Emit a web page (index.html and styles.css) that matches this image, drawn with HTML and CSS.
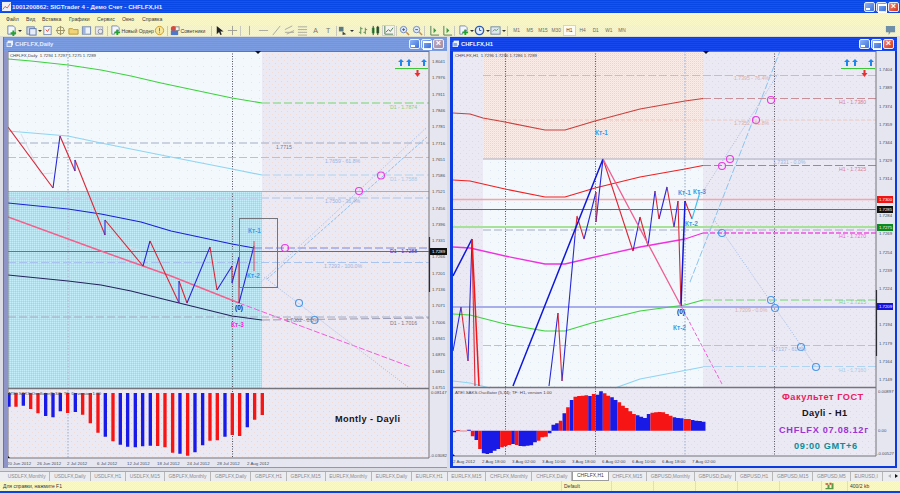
FILE: index.html
```html
<!DOCTYPE html>
<html lang="ru">
<head>
<meta charset="utf-8">
<title>SIGTrader 4</title>
<link rel="stylesheet" href="styles.css">
</head>
<body>
<svg class="defs" aria-hidden="true">
  <defs>
    <pattern id="p-lilac" width="6" height="6" patternUnits="userSpaceOnUse">
      <rect width="6" height="6" fill="#ebe9f4"/>
      <rect x="1" y="1" width="1" height="1" fill="#f2dcd8"/>
      <rect x="4" y="4" width="1" height="1" fill="#d2dbf2"/>
    </pattern>
    <pattern id="p-pale" width="8" height="8" patternUnits="userSpaceOnUse">
      <rect width="8" height="8" fill="#f2f8fc"/>
      <rect x="2" y="3" width="1" height="1" fill="#dfe8f2"/>
    </pattern>
    <pattern id="p-cyan" width="2" height="2" patternUnits="userSpaceOnUse">
      <rect width="2" height="2" fill="#a8e4f6"/>
      <rect width="1" height="1" fill="#92dcf2"/>
      <rect x="1" y="1" width="1" height="1" fill="#c4eefa"/>
    </pattern>
    <pattern id="p-salmon" width="2" height="2" patternUnits="userSpaceOnUse">
      <rect width="2" height="2" fill="#fbece8"/>
      <rect width="1" height="1" fill="#f5d0c8"/>
      <rect x="1" y="1" width="1" height="1" fill="#f9e2dc"/>
    </pattern>
    <symbol id="i-new" viewBox="0 0 12 12"><path d="M2 1h6l2 2v7H2z" fill="#f4f6fb" stroke="#6b7fa8"/><path d="M7 6h2v2h2v2H9v2H7v-2H5V8h2z" fill="#22a52c"/></symbol>
    <symbol id="i-doc" viewBox="0 0 12 12"><rect x="1" y="2" width="8" height="8" fill="#cfd9ef" stroke="#6b7fa8"/><rect x="4" y="4" width="7" height="7" fill="#e6ecf8" stroke="#5874b0"/></symbol>
    <symbol id="i-mkt" viewBox="0 0 12 12"><rect x="2" y="1.500" width="8" height="9" fill="#f4f6fb" stroke="#7a8cae"/><path d="M4 5l2 2 2-3" fill="none" stroke="#d83a2c"/></symbol>
    <symbol id="i-nav" viewBox="0 0 12 12"><circle cx="6" cy="6" r="4" fill="none" stroke="#9a8f60"/><path d="M6 1v10M1 6h10" stroke="#9a8f60"/></symbol>
    <symbol id="i-dir" viewBox="0 0 12 12"><path d="M1 4h4l1 1h5v5H1z" fill="#f2d378" stroke="#b89a3c"/></symbol>
    <symbol id="i-win" viewBox="0 0 12 12"><rect x="1.500" y="2" width="9" height="8" fill="#eef2fa" stroke="#6b7fa8"/><rect x="2" y="2" width="3" height="8" fill="#9fb6e2"/></symbol>
    <symbol id="i-mag" viewBox="0 0 12 12"><rect x="1.500" y="2" width="8" height="8" fill="#e8e8ee" stroke="#a0a4b0"/><circle cx="7" cy="7" r="2.500" fill="none" stroke="#8b90a0"/></symbol>
    <symbol id="i-order" viewBox="0 0 12 12"><path d="M2 1h6l2 2v3H7v2H5v2H2z" fill="#f4f6fb" stroke="#7a8cae"/><path d="M7 5h2v2h2v2H9v2H7V9H5V7h2z" fill="#22a52c"/></symbol>
    <symbol id="i-warn" viewBox="0 0 12 12"><circle cx="6" cy="6" r="4.500" fill="#f7e8a0" stroke="#c89a2a"/><path d="M6 3v4M6 8v1" stroke="#c0641a"/></symbol>
    <symbol id="i-ea" viewBox="0 0 12 12"><circle cx="5" cy="4" r="3" fill="#d84a3c"/><rect x="2" y="6" width="8" height="5" fill="#4f78c8"/><rect x="7" y="2" width="4" height="4" fill="#f2f2f2" stroke="#888"/></symbol>
    <symbol id="i-cur" viewBox="0 0 12 12"><path d="M3 1v9l2.500-2.500L7 11l1.500-.7L7 7h3.500z" fill="#222"/></symbol>
    <symbol id="i-cross" viewBox="0 0 12 12"><path d="M6 1v10M1 6h10" stroke="#9a9a90"/></symbol>
    <symbol id="i-vl" viewBox="0 0 12 12"><path d="M6 1v10" stroke="#a6a69a"/></symbol>
    <symbol id="i-hl" viewBox="0 0 12 12"><path d="M1 6h10" stroke="#a6a69a"/></symbol>
    <symbol id="i-sl" viewBox="0 0 12 12"><path d="M2 11L10 1" stroke="#a6a69a"/></symbol>
    <symbol id="i-ch" viewBox="0 0 12 12"><path d="M1 5L9 1M3 10l8-4M1 8h10" stroke="#a6a69a" fill="none"/></symbol>
    <symbol id="i-fib" viewBox="0 0 12 12"><path d="M1 2h10M1 5h10M1 8h10M1 11h10" stroke="#a6a69a"/></symbol>
    <symbol id="i-shp" viewBox="0 0 12 12"><rect x="1" y="2" width="5" height="5" fill="#5a7a80"/><path d="M5 7l4 3-4 1z" fill="#444"/></symbol>
    <symbol id="i-bar" viewBox="0 0 12 12"><path d="M3 2v8M3 4h2M3 8H1M8 3v7M8 5h2M8 8H6" stroke="#5a8a50" fill="none"/></symbol>
    <symbol id="i-cnd" viewBox="0 0 12 12"><rect x="2" y="3" width="3" height="6" fill="#4a9a48"/><rect x="7" y="2" width="3" height="7" fill="#3a6a3a"/><path d="M3.500 1v10M8.500 1v10" stroke="#333"/></symbol>
    <symbol id="i-lin" viewBox="0 0 12 12"><path d="M2 1v9h9M3 8l3-3 2 2 3-4" stroke="#4a7a50" fill="none"/></symbol>
    <symbol id="i-zin" viewBox="0 0 12 12"><circle cx="5" cy="5" r="3.500" fill="#dfe9f8" stroke="#6e86b4"/><path d="M3.500 5h3M5 3.500v3" stroke="#3a5a98"/><path d="M8 8l3 3" stroke="#c08a4a" stroke-width="1.500"/></symbol>
    <symbol id="i-zou" viewBox="0 0 12 12"><circle cx="5" cy="5" r="3.500" fill="#dfe9f8" stroke="#6e86b4"/><path d="M3.500 5h3" stroke="#3a5a98"/><path d="M8 8l3 3" stroke="#c08a4a" stroke-width="1.500"/></symbol>
    <symbol id="i-auto" viewBox="0 0 12 12"><path d="M2 1v10h9" stroke="#4a7a50" fill="none"/><path d="M5 3v6l3-3z" fill="#3a9a40"/></symbol>
    <symbol id="i-clock" viewBox="0 0 12 12"><circle cx="6" cy="6" r="4.500" fill="#e8effa" stroke="#2a5ab8" stroke-width="1.500"/><path d="M6 3v3h2" stroke="#2a5ab8" fill="none"/></symbol>
    <symbol id="i-tpl" viewBox="0 0 12 12"><rect x="1" y="2" width="10" height="8" fill="#dfe7f0" stroke="#6e86a0"/><path d="M3 7l2-2 2 1 2-2" stroke="#4a9a58" fill="none"/></symbol>
    <symbol id="i-msg" viewBox="0 0 12 12"><path d="M1 1h10v7H6l-2 3V8H1z" fill="#6f8fa8"/></symbol>
    <symbol id="i-app" viewBox="0 0 12 12"><rect width="12" height="12" fill="#eef2f8"/><path d="M1 10l3-4 3 2 4-6" stroke="#d83a2c" fill="none"/></symbol>
    <symbol id="i-mdi" viewBox="0 0 12 12"><rect x="3" y="1.500" width="7" height="6" fill="#dfe9f8" stroke="#fff"/><rect x="1.500" y="4" width="7" height="6" fill="#8aa8e4" stroke="#fff"/></symbol>
    <symbol id="i-stat" viewBox="0 0 12 12"><path d="M0 9h3V4h3v5h3V2h3v9H0z" fill="#5a9a48"/><path d="M0 2h4v2H0zM6 1h3v3H6z" fill="#c84a3a"/></symbol>
  </defs>
</svg>

<div class="app">
  <header class="titlebar">
    <svg class="ico ico-app"><use href="#i-app"/></svg>
    <span class="titlebar-text">1001200862: SIGTrader 4 - Демо Счет - CHFLFX,H1</span>
    <span class="winbtns">
      <span class="wb wb-min"></span><span class="wb wb-max"></span><span class="wb wb-close">×</span>
    </span>
  </header>

  <nav class="menubar">
    <span class="m m1">Файл</span><span class="m m2">Вид</span><span class="m m3">Вставка</span><span class="m m4">Графики</span><span class="m m5">Сервис</span><span class="m m6">Окно</span><span class="m m7">Справка</span>
  </nav>

  <div class="toolbar">
    <span class="tb tb-c c20"><svg class="ico"><use href="#i-new"/></svg><i class="caret"></i></span>
    <span class="tb tb-c c15"><svg class="ico"><use href="#i-doc"/></svg><i class="caret"></i></span>
    <span class="tb"><svg class="ico"><use href="#i-mkt"/></svg></span>
    <span class="tb"><svg class="ico"><use href="#i-nav"/></svg></span>
    <span class="tb"><svg class="ico"><use href="#i-dir"/></svg></span>
    <span class="tb"><svg class="ico"><use href="#i-win"/></svg></span>
    <span class="tb"><svg class="ico"><use href="#i-mag"/></svg></span>
    <span class="tsep s35"></span>
    <span class="tb tb-t tb-order"><svg class="ico"><use href="#i-order"/></svg>Новый Ордер</span>
    <span class="tb"><svg class="ico"><use href="#i-warn"/></svg></span>
    <span class="tsep s3"></span>
    <span class="tb tb-t tb-ea"><svg class="ico"><use href="#i-ea"/></svg>Советники</span>
    <span class="tsep s3"></span>
    <span class="tb"><svg class="ico"><use href="#i-cur"/></svg></span>
    <span class="tb"><svg class="ico"><use href="#i-cross"/></svg></span>
    <span class="tsep s4"></span>
    <span class="tb"><svg class="ico"><use href="#i-vl"/></svg></span>
    <span class="gap1"></span>
    <span class="tb"><svg class="ico"><use href="#i-hl"/></svg></span>
    <span class="tb"><svg class="ico"><use href="#i-sl"/></svg></span>
    <span class="tb"><svg class="ico"><use href="#i-ch"/></svg></span>
    <span class="tb"><svg class="ico"><use href="#i-fib"/></svg></span>
    <span class="tb tb-a">A</span>
    <span class="tb tb-a tb-n">T</span>
    <span class="tsep s3"></span>
    <span class="tb tb-c c18"><svg class="ico"><use href="#i-shp"/></svg><i class="caret"></i></span>
    <span class="gap1"></span>
    <span class="tb tb-n"><svg class="ico"><use href="#i-bar"/></svg></span>
    <span class="tb tb-n"><svg class="ico"><use href="#i-cnd"/></svg></span>
    <span class="tb tb-on"><svg class="ico"><use href="#i-lin"/></svg></span>
    <span class="tsep s3"></span>
    <span class="tb"><svg class="ico"><use href="#i-zin"/></svg></span>
    <span class="tb tb-n12"><svg class="ico"><use href="#i-zou"/></svg></span>
    <span class="tsep s5"></span>
    <span class="tb"><svg class="ico"><use href="#i-auto"/></svg></span>
    <span class="tb tb-n12"><svg class="ico"><use href="#i-auto"/></svg></span>
    <span class="tsep s5"></span>
    <span class="tb tb-c c16"><svg class="ico"><use href="#i-order"/></svg><i class="caret"></i></span>
    <span class="tb tb-c c16"><svg class="ico"><use href="#i-clock"/></svg><i class="caret"></i></span>
    <span class="tb tb-c c16"><svg class="ico"><use href="#i-tpl"/></svg><i class="caret"></i></span>
    <span class="tsep s4"></span>
    <span class="per">M1</span><span class="per">M5</span><span class="per">M15</span><span class="per">M30</span><span class="per per-on">H1</span><span class="per">H4</span><span class="per">D1</span><span class="per">W1</span><span class="per">MN</span>
    <span class="tb tb-end"><svg class="ico"><use href="#i-msg"/></svg></span>
  </div>

  <main class="mdi">
    <section class="win win-left">
      <div class="wtitle">
        <svg class="ico ico-mdi"><use href="#i-mdi"/></svg>
        <span class="wtitle-text">CHFLFX,Daily</span>
        <span class="winbtns winbtns-in">
          <span class="wb wb-min"></span><span class="wb wb-max"></span><span class="wb wb-close wb-dim">×</span>
        </span>
      </div>
      <svg class="chart chart-left" viewBox="7 52 439 416" role="img" aria-label="CHFLFX Daily">
        <rect x="7" y="52" width="254" height="337" fill="url(#p-pale)"/>
        <rect x="261" y="52" width="167" height="337" fill="url(#p-lilac)"/>
        <rect x="7" y="193" width="254" height="196" fill="url(#p-cyan)"/>
        <rect x="7" y="390" width="421" height="69" fill="url(#p-lilac)"/>
        <rect x="428" y="52" width="18" height="416" class="axisbg"/>
        <rect x="7" y="459" width="439" height="9" class="axisbg"/>

        <path class="vdot vdot-l" d="M67 52V459"/>
        <path class="vdot" d="M231.500 52V459"/>

        <path class="dash d-gray" d="M7 144H428"/>
        <path class="dash d-ltb" d="M7 158.500H428"/>
        <path class="solid s-gray" d="M7 192.500H428"/>
        <path class="dash d-ltb d-pale" d="M7 199H428"/>
        <path class="solid s-olive" d="M7 252.500H261"/>
        <path class="solid s-dk" d="M261 252.500H428"/>
        <path class="dash d-ltb" d="M7 263.500H428"/>
        <path class="dash d-gray" d="M7 318H428"/>

        <path class="cv c-green" d="M7 60L30 62 67 66 100 71 130 77 160 84 231 99 261 104"/>
        <path class="dash c-green-d" d="M261 104H428"/>
        <path class="cv c-sky" d="M7 132L67 137 100 144 170 158 231 170 261 176"/>
        <path class="dash c-sky-d" d="M261 176H428"/>
        <path class="cv c-blue" d="M7 204L67 210 100 215 140 223 170 232 231 245 253 249"/>
        <path class="dash c-blue-d" d="M253 249H428"/>
        <path class="cv c-navy" d="M7 276L67 282 100 286 130 292 170 302 231 317 261 321"/>
        <path class="dash c-navy-d" d="M261 321L428 319"/>
        <path class="cv c-pink" d="M7 218L100 252 170 277 238 304"/>
        <path class="dash c-mag-d" d="M238 304L410 368"/>

        <path class="zz z-ghost" d="M20 135L40 175 52 174M60 140L74 172M86 190L100 225 120 245 140 252"/>
        <path class="zz z-red" d="M7 128L52 189M59 137L74 172M74 161L104 236M104 221L142 267M149 242L178 304M178 282L186 304M209 248L216 291M231 267V284M238 258V304"/>
        <path class="zz z-blue" d="M52 189L59 137M74 172V161M104 236V221M142 267L149 242M178 304V282M186 304L209 248M216 291L231 267M231 284L238 258M238 304L253 247"/>
        <path class="zz z-pinkred" d="M253 242V272"/>

        <path class="dot dot-b" d="M258 285L426 128"/>
        <path class="dot dot-b dot-s" d="M266 280L426 138"/>
        <path class="dot dot-b" d="M263 278L407 388"/>

        <rect x="238.500" y="219.500" width="38" height="69" class="box"/>
        <circle cx="284" cy="249" r="3.500" class="ring r-m"/>
        <circle cx="358" cy="192" r="3.500" class="ring r-m"/>
        <circle cx="380" cy="176.500" r="3.500" class="ring r-m"/>
        <circle cx="298" cy="304" r="3.500" class="ring r-b"/>
        <circle cx="313.500" cy="321" r="3.500" class="ring r-b"/>

        <text class="lab lab-g" x="389" y="110">D1 - 1.7874</text>
        <text class="lab lab-s" x="389" y="182">D1 - 1.7588</text>
        <text class="lab lab-n" x="275" y="150">1.7715</text>
        <text class="lab lab-f" x="324" y="164">1.7659 - 61.8%</text>
        <text class="lab lab-f" x="324" y="204">1.7500 - 36.4%</text>
        <text class="lab lab-bb" x="389" y="254">D1 - 1.7288</text>
        <text class="lab lab-f" x="323" y="269">1.7293 - 100.0%</text>
        <text class="lab lab-n" x="389" y="326">D1 - 1.7016</text>
        <text class="lab lab-n" x="285" y="323">1.7002 - 0.0%</text>

        <text class="kt kt-b" x="247" y="234">Кт-1</text>
        <text class="kt kt-b" x="246" y="279">Кт-2</text>
        <text class="kt kt-m" x="230" y="328">Кт-3</text>
        <text class="kt kt-n" x="234" y="311">(0)</text>

        <path class="arr-u" d="M400 60l3 3h-2v4h-2v-4h-2zM408 60l3 3h-2v4h-2v-4h-2zM423 60l3 3h-2v4h-2v-4h-2z"/>
        <path class="arr-g" d="M394 69.500H427"/>
        <path class="arr-d" d="M415.500 71h2v3h2l-3 4-3-4h2z"/>

        <text class="hdr" x="9" y="58">CHFLFX,Daily  1.7294 1.7297 1.7275 1.7289</text>

        <path class="paneline" d="M7 52.500H428M428 52V459M7 459H428M7 52V459"/>
        <path class="paneline-b" d="M7 389.500H428"/>
        <path class="axisbar" d="M428.500 238V293"/>
        <path class="tri" d="M254 52h6l-3 3z"/>

        <g class="ax">
          <text x="431" y="64">1.8041</text><text x="431" y="80">1.7976</text><text x="431" y="97">1.7911</text><text x="431" y="113">1.7846</text><text x="431" y="129">1.7781</text><text x="431" y="146">1.7716</text><text x="431" y="162">1.7651</text><text x="431" y="178">1.7586</text><text x="431" y="194">1.7521</text><text x="431" y="211">1.7456</text><text x="431" y="227">1.7396</text><text x="431" y="243">1.7331</text><text x="431" y="259">1.7266</text><text x="431" y="276">1.7201</text><text x="431" y="292">1.7136</text><text x="431" y="308">1.7071</text><text x="431" y="325">1.7006</text><text x="431" y="341">1.6941</text><text x="431" y="357">1.6876</text><text x="431" y="374">1.6811</text><text x="431" y="390">1.6751</text><text x="430" y="395">0.08147</text><text x="429" y="458">-0.03082</text>
        </g>
        <rect x="429" y="249" width="17" height="7" class="pb pb-k"/>
        <text class="pbt" x="431" y="254">1.7289</text>

        <g transform="translate(0 385) scale(.3333)">
          <path class="hist h-b" d="M24 27V68M67 27V65M134 27V96M156 27V100M178 27V82M223 27V84M313 27V158M358 27V182M380 27V188M403 27V190M425 27V187M448 27V185M537 27V209M582 27V205M605 27V184M672 27V158M739 27V130"/>
          <path class="hist h-r" d="M45 27V68M89 27V75M111 27V88M200 27V87M245 27V92M268 27V118M291 27V146M336 27V172M470 27V186M492 27V190M515 27V206M560 27V215M627 27V170M649 27V169M694 27V153M716 27V156M761 27V107M784 27V93"/>
        </g>
        <text class="osc" x="7" y="396">ATEI.SAKS.Oscillator(5,34); TF: D, version 1.00</text>
        <text class="big" x="334" y="423" textLength="65">Montly - Dayli</text>
        <path class="tri" d="M7 457l2 2H7z"/>

        <g class="tm">
          <text x="6" y="466">20 Jun 2012</text><text x="36" y="466">26 Jun 2012</text><text x="66" y="466">2 Jul 2012</text><text x="96" y="466">6 Jul 2012</text><text x="126" y="466">12 Jul 2012</text><text x="156" y="466">18 Jul 2012</text><text x="186" y="466">24 Jul 2012</text><text x="216" y="466">28 Jul 2012</text><text x="246" y="466">2 Aug 2012</text>
        </g>
      </svg>
    </section>

    <section class="win win-right">
      <div class="wtitle wtitle-on">
        <svg class="ico ico-mdi"><use href="#i-mdi"/></svg>
        <span class="wtitle-text">CHFLFX,H1</span>
        <span class="winbtns winbtns-in">
          <span class="wb wb-min"></span><span class="wb wb-max"></span><span class="wb wb-close">×</span>
        </span>
      </div>
      <svg class="chart chart-right" viewBox="453 52 442 415" role="img" aria-label="CHFLFX H1">
        <rect x="453" y="52" width="30" height="337" fill="url(#p-lilac)"/>
        <rect x="483" y="52" width="220" height="108" fill="url(#p-salmon)"/>
        <rect x="483" y="160" width="220" height="229" fill="url(#p-pale)"/>
        <rect x="703" y="52" width="173" height="337" fill="url(#p-lilac)"/>
        <rect x="453" y="389" width="423" height="68" fill="url(#p-lilac)"/>
        <rect x="876" y="52" width="19" height="415" class="axisbg"/>
        <rect x="453" y="457" width="442" height="10" class="axisbg"/>

        <path class="vdot vdot-d" d="M505.500 52V457M595.500 52V457M774.500 52V457"/>
        <path class="vdot vdot-l" d="M685 52V457"/>

        <path class="dash d-mauve" d="M483 76.500H876"/>
        <path class="dash d-peach" d="M483 121H876"/>
        <path class="solid s-gray" d="M483 160H876"/>
        <path class="solid s-pink" d="M453 200.500H876"/>
        <path class="solid s-dk" d="M453 210.500H876"/>
        <path class="solid s-lgreen" d="M453 228H876"/>
        <path class="dash d-gray" d="M483 231H876"/>
        <path class="solid s-lilac" d="M453 308H876"/>
        <path class="dash d-ltb" d="M483 346.500H876"/>

        <path class="cv c-brick" d="M453 114L470 115 483 119 505 123 545 131 565 131 595 122 640 110 685 102 703 99.500"/>
        <path class="dash c-brick-d" d="M703 99.500H876"/>
        <path class="cv c-red" d="M453 181L470 182 505 190 545 198 565 198 595 189 640 178 685 170 703 166.500"/>
        <path class="dash c-red-d" d="M703 166.500H876"/>
        <path class="cv c-mag" d="M453 248L470 249 505 257 545 265 565 265 595 258 640 248 685 240 703 234"/>
        <path class="dash c-mag-d2" d="M703 234H876"/>
        <path class="cv c-green" d="M453 315L470 316 505 325 545 332 565 332 595 323 640 312 685 306 703 301"/>
        <path class="dash c-green-d" d="M703 301H876"/>
        <path class="cv c-sky" d="M453 382L470 384 490 389M615 389L640 380 703 368"/>
        <path class="dash c-sky-d" d="M703 367.500H876"/>

        <path class="dot dot-b" d="M697 202L778 75"/>
        <path class="dash c-ltline" d="M690 283L780 52"/>
        <path class="dot dot-b" d="M715 222L816 368"/>
        <path class="dash c-mag-d3" d="M681 307L722 385"/>

        <path class="zz z-blue" d="M549 387L558 314M562 382L575 237M584 240L596 193M596 223L603 160M633 252L640 218M648 247L655 192M659 220L667 188M674 228L678 202M453 352L461 308M468 362L472 240"/>
        <path class="zz z-red" d="M558 314L562 382M575 237L577 217 584 240M603 160L633 252M640 218L648 247M655 192L659 220M667 188L674 228M678 202L681 307M596 193V223M461 308L468 362M472 240L475 387M685 202L692 220"/>
        <path class="zz z-thick-b" d="M513 387L603 160M453 277L472 240M681 307L685 202"/>
        <path class="zz z-thick-p" d="M603 160L681 307"/>
        <path class="zz z-thick-r" d="M472 240L479 387"/>
        <path class="zz z-sky" d="M692 220L700 193"/>

        <circle cx="771" cy="101" r="3.500" class="ring r-m"/>
        <circle cx="756" cy="121" r="3.500" class="ring r-m"/>
        <circle cx="730" cy="160" r="3.500" class="ring r-m"/>
        <circle cx="722" cy="167" r="3.500" class="ring r-m"/>
        <circle cx="722" cy="234" r="3.500" class="ring r-b"/>
        <circle cx="771" cy="301" r="3.500" class="ring r-b"/>
        <circle cx="775" cy="309" r="3.500" class="ring r-b"/>
        <circle cx="801" cy="348" r="3.500" class="ring r-b"/>
        <circle cx="816" cy="368" r="3.500" class="ring r-b"/>

        <text class="lab lab-p" x="734" y="81">1.7395 - 76.4%</text>
        <text class="lab lab-p" x="734" y="126">1.7352 - 61.8%</text>
        <text class="lab lab-r" x="839" y="105">H1 - 1.7380</text>
        <text class="lab lab-r" x="839" y="172">H1 - 1.7325</text>
        <text class="lab lab-f" x="773" y="165">1.7331 - 0.0%</text>
        <text class="lab lab-m" x="839" y="239">H1 - 1.7270</text>
        <text class="lab lab-g" x="839" y="305">H1 - 1.7215</text>
        <text class="lab lab-p" x="735" y="313">1.7209 - 0.0%</text>
        <text class="lab lab-f" x="771" y="352">1.7137 - 61.8%</text>
        <text class="lab lab-s" x="839" y="373">H1 - 1.7160</text>

        <text class="kt kt-b" x="595" y="136">Кт-1</text>
        <text class="kt kt-b" x="678" y="196">Кт-1</text>
        <text class="kt kt-b" x="693" y="195">Кт-3</text>
        <text class="kt kt-b" x="685" y="227">Кт-2</text>
        <text class="kt kt-b" x="673" y="331">Кт-2</text>
        <text class="kt kt-n" x="677" y="315">(0)</text>

        <path class="arr-u" d="M847 60l3 3h-2v4h-2v-4h-2zM855 60l3 3h-2v4h-2v-4h-2zM871 60l3 3h-2v4h-2v-4h-2z"/>
        <path class="arr-g" d="M841 69.500H875"/>
        <path class="arr-d" d="M863.500 71h2v3h2l-3 4-3-4h2z"/>

        <text class="hdr" x="455" y="58">CHFLFX,H1  1.7296 1.7296 1.7286 1.7289</text>

        <path class="paneline" d="M453 52.500H876M876 52V457M453 457H876"/>
        <path class="paneline-b" d="M453 388.500H876"/>
        <path class="axisbar" d="M876.500 291V357"/>
        <path class="tri" d="M703 52h6l-3 3z"/>

        <g class="ax">
          <text x="879" y="72">1.7404</text><text x="879" y="90">1.7389</text><text x="879" y="109">1.7374</text><text x="879" y="127">1.7359</text><text x="879" y="145">1.7344</text><text x="879" y="163">1.7329</text><text x="879" y="181">1.7314</text><text x="879" y="218">1.7284</text><text x="879" y="236">1.7269</text><text x="879" y="255">1.7254</text><text x="879" y="273">1.7239</text><text x="879" y="291">1.7224</text><text x="879" y="327">1.7194</text><text x="879" y="346">1.7179</text><text x="879" y="364">1.7164</text><text x="879" y="382">1.7149</text><text x="878" y="394">0.00897</text><text x="878" y="433">0.00</text><text x="877" y="456">-0.00527</text>
        </g>
        <rect x="877" y="197" width="16" height="7" class="pb pb-r"/><text class="pbt" x="879" y="202">1.7300</text>
        <rect x="877" y="207" width="16" height="7" class="pb pb-k"/><text class="pbt" x="879" y="212">1.7285</text>
        <rect x="877" y="225" width="16" height="7" class="pb pb-g"/><text class="pbt" x="879" y="230">1.7275</text>
        <rect x="877" y="304" width="16" height="7" class="pb pb-b"/><text class="pbt" x="879" y="309">1.7209</text>

        <g transform="translate(450 385) scale(.3333)">
          <path class="hist2 h-b" d="M13 140V145M57 140V137M79 140V168M101 140V208M112 140V210M123 140V207M134 140V200M145 140V195M189 140V180M211 140V186M222 140V187M233 140V185M244 140V184M255 140V175M299 140V148M310 140V122M321 140V118M343 140V88M365 140V48M420 140V36M442 140V32M453 140V22M486 140V40M497 140V48M563 140V94M574 140V98M585 140V102M596 140V90M673 140V100M684 140V102M695 140V103M728 140V108M739 140V110M750 140V111M761 140V113"/>
          <path class="hist2 h-r" d="M24 140V138M35 140V142M46 140V142M68 140V157M90 140V195M156 140V190M167 140V187M178 140V183M200 140V183M266 140V170M277 140V160M288 140V158M332 140V110M354 140V70M376 140V38M387 140V36M398 140V35M409 140V34M431 140V30M464 140V28M475 140V35M508 140V55M519 140V65M530 140V72M541 140V82M552 140V90M607 140V86M618 140V85M629 140V84M640 140V85M651 140V90M662 140V95M706 140V105M717 140V105"/>
        </g>
        <text class="osc" x="455" y="395">ATEI.SAKS.Oscillator (5,34); TF: H1, version 1.00</text>
        <text class="big b-c" x="782" y="401" textLength="81">Факультет ГОСТ</text>
        <text class="big" x="802" y="417" textLength="45">Dayli - H1</text>
        <text class="big b-p" x="779" y="434" textLength="89">CHFLFX 07.08.12г</text>
        <text class="big b-t" x="794" y="450" textLength="63">09:00 GMT+6</text>
        <path class="tri" d="M453 455l2 2h-2z"/>

        <g class="tm">
          <text x="453" y="464">2 Aug 2012</text><text x="482" y="464">2 Aug 18:00</text><text x="512" y="464">3 Aug 02:00</text><text x="542" y="464">3 Aug 10:00</text><text x="572" y="464">3 Aug 18:00</text><text x="602" y="464">6 Aug 02:00</text><text x="632" y="464">6 Aug 10:00</text><text x="662" y="464">6 Aug 18:00</text><text x="692" y="464">7 Aug 02:00</text>
        </g>
      </svg>
    </section>
  </main>

  <div class="tabs">
    <span class="tab">USDLFX,Monthly</span><span class="tab">USDLFX,Daily</span><span class="tab">USDLFX,H1</span><span class="tab">USDLFX,M15</span><span class="tab">GBPLFX,Monthly</span><span class="tab">GBPLFX,Daily</span><span class="tab">GBPLFX,H1</span><span class="tab">GBPLFX,M15</span><span class="tab">EURLFX,Monthly</span><span class="tab">EURLFX,Daily</span><span class="tab">EURLFX,H1</span><span class="tab">EURLFX,M15</span><span class="tab">CHFLFX,Monthly</span><span class="tab">CHFLFX,Daily</span><span class="tab tab-on">CHFLFX,H1</span><span class="tab">CHFLFX,M15</span><span class="tab">GBPUSD,Monthly</span><span class="tab">GBPUSD,Daily</span><span class="tab">GBPUSD,H1</span><span class="tab">GBPUSD,M15</span><span class="tab">GBPUSD,M5</span><span class="tab">EURUSD,I</span>
    <span class="tabarrows"><i class="ta ta-l"></i><i class="ta ta-r"></i></span>
  </div>

  <footer class="status">
    <span class="st st-help">Для справки, нажмите F1</span>
    <span class="st st-prof">Default</span>
    <span class="st st-a"></span><span class="st st-a"></span><span class="st st-a"></span><span class="st st-a"></span><span class="st st-a"></span>
    <span class="st st-conn"><svg class="ico"><use href="#i-stat"/></svg></span>
    <span class="st st-kb">400/2 kb</span>
  </footer>
  <div class="bottomstripe"></div>
</div>
</body>
</html>
```
FILE: styles.css
```css
* { box-sizing: border-box; }
html, body { margin: 0; padding: 0; }
body {
  width: 900px;
  height: 493px;
  overflow: hidden;
  font-family: "Liberation Sans", Arial, sans-serif;
  background: #dcdce4;
}
.defs { position: absolute; width: 0; height: 0; }
.app { width: 900px; height: 493px; display: flex; flex-direction: column; }
.ico { width: 11px; height: 11px; display: block; flex: none; }

/* main title bar */
.titlebar {
  height: 13px;
  display: flex;
  align-items: center;
  padding: 0 1px 0 2px;
  gap: 1px;
  color: #e6ecff;
  font-size: 6.2px;
  font-weight: bold;
  background: repeating-linear-gradient(180deg, #0a48e6 0 1px, #1254ee 1px 2px);
}
.ico-app { width: 9px; height: 9px; }
.winbtns { margin-left: auto; display: flex; gap: 1px; }
.wb {
  width: 11px;
  height: 10px;
  border: 1px solid #e8eefc;
  border-radius: 2px;
  background: linear-gradient(135deg, #8fb4f4, #3a70dc);
  position: relative;
  display: block;
  font-size: 9px;
  line-height: 7px;
  text-align: center;
  color: #fff;
  font-weight: bold;
}
.wb-close { background: linear-gradient(135deg, #f08a78, #d83418); }
.wb-dim { background: linear-gradient(135deg, #c0a8b8, #a08ca8); }
.wb-min::after { content: ""; position: absolute; left: 1px; bottom: 1px; width: 4px; height: 2px; background: #fff; }
.wb-max::after { content: ""; position: absolute; left: 1px; top: 1px; width: 7px; height: 6px; border: 1px solid #fff; border-top-width: 2px; }

/* menu */
.menubar {
  height: 12px;
  display: flex;
  align-items: center;
  font-size: 5.2px;
  color: #3a3a34;
  background: repeating-conic-gradient(#fbf8c8 0 25%, #f0eedc 0 50%) 0 0 / 2px 2px;
}
.m { display: block; }
.m1 { margin-left: 6px; width: 20px; }
.m2 { width: 16px; }
.m3 { width: 27px; }
.m4 { width: 28px; }
.m5 { width: 25px; }
.m6 { width: 20px; }

/* toolbar */
.toolbar {
  height: 12px;
  display: flex;
  align-items: center;
  padding-left: 6px;
  font-size: 5.1px;
  color: #3c3c3c;
  background: repeating-conic-gradient(#f8f6cc 0 25%, #eeecdc 0 50%) 0 0 / 2px 2px;
  border-bottom: 1px solid #dcdcd0;
}
.tb { width: 13px; flex: none; display: flex; align-items: center; justify-content: center; white-space: nowrap; }
.tb-n { width: 12.5px; }
.tb-n12 { width: 12px; }
.tb-c { justify-content: flex-start; }
.tb-c .ico { margin-right: 1px; }
.c20 { width: 20px; }
.c15 { width: 15px; }
.c18 { width: 18px; }
.c16 { width: 16px; }
.caret { width: 0; height: 0; border: 2px solid transparent; border-top: 2px solid #333; border-bottom: 0; display: block; }
.tb-t { justify-content: flex-start; gap: 1px; }
.tb-order { width: 43px; }
.tb-ea { width: 41px; }
.tb-a { font-size: 7px; color: #77776c; }
.tb-on { background: #f4f4ee; outline: 1px solid #d0d0c8; outline-offset: -1px; }
.tsep { height: 10px; flex: none; position: relative; }
.tsep::after { content: ""; position: absolute; left: 1px; top: 0; height: 10px; width: 1px; background: #c8c8bc; }
.s3 { width: 3px; }
.s35 { width: 3.5px; }
.s4 { width: 4px; }
.s5 { width: 5px; }
.gap1 { width: 1.5px; flex: none; }
.per { width: 13.2px; flex: none; text-align: center; color: #6a6a60; font-size: 4.8px; line-height: 11px; }
.per-on { background: #fcfcf4; outline: 1px solid #d4d4cc; outline-offset: -1px; color: #333; }
.tb-end { margin-left: auto; margin-right: 3px; }

/* windows */
.mdi { height: 434px; display: flex; gap: 3px; padding-left: 3px; }
.win { height: 431px; display: flex; flex-direction: column; }
.win-left { width: 444px; background: #8f94c8; padding: 0 1px 2px 4px; border-left: 1px solid #6a70b0; }
.win-right { width: 447px; background: #0a3ae0; padding: 0 2px 2px 3px; }
.wtitle {
  height: 14px;
  margin: 0 -1px 0 -4px;
  display: flex;
  align-items: center;
  gap: 1px;
  padding: 0 2px 0 2px;
  background: repeating-linear-gradient(180deg, #7494dc 0 1px, #7c9ce2 1px 2px);
  color: #e4ecfc;
  font-size: 5.8px;
  font-weight: bold;
  flex: none;
}
.wtitle-on {
  margin: 0 -2px 0 -3px;
  background: repeating-linear-gradient(180deg, #0e3ee4 0 1px, #1648ee 1px 2px);
  color: #f2f6ff;
}
.ico-mdi { width: 8px; height: 8px; }
.winbtns-in { gap: 1px; margin-right: 1px; }
.chart { display: block; flex: none; }
.chart-left { width: 439px; height: 416px; }
.chart-right { width: 442px; height: 415px; }

/* chart pieces */
.axisbg { fill: #e6e6f0; }
.vdot { fill: none; stroke: #50505c; stroke-width: 1; stroke-dasharray: 1 1.500; }
.vdot-l { stroke: #b4c0d8; stroke-width: 1.500; stroke-dasharray: 1.500 1.500; }
.vdot-d { stroke: #55505c; }
.dash { fill: none; stroke-dasharray: 8 3; stroke-width: 1; }
.d-gray { stroke: #a4acc4; }
.d-ltb { stroke: #a9c4ee; }
.d-pale { stroke: #c2d0ea; stroke-width: 1.500; }
.d-mauve { stroke: #d4b4d4; }
.d-peach { stroke: #eec8bc; stroke-dasharray: 4 2; }
.solid { fill: none; stroke-width: 1; }
.s-gray { stroke: #a8acbc; }
.s-olive { stroke: #7c7a38; }
.s-dk { stroke: #6c6c6c; }
.s-pink { stroke: #f6a4a4; stroke-width: 1.500; }
.s-lgreen { stroke: #a8e29a; stroke-width: 2; }
.s-lilac { stroke: #a8aeea; stroke-width: 2; }
.cv { fill: none; stroke-width: 1; stroke-linejoin: round; }
.c-green { stroke: #3ed23e; stroke-width: 1.200; }
.c-green-d { stroke: #72d672; }
.c-sky { stroke: #8fd4f2; stroke-width: 1.200; }
.c-sky-d { stroke: #aed4f2; }
.c-blue { stroke: #1820d8; stroke-width: 1.100; }
.c-blue-d { stroke: #7c84dc; }
.c-navy { stroke: #24245c; stroke-width: 1.100; }
.c-navy-d { stroke: #9c9cb4; }
.c-pink { stroke: #f4608c; stroke-width: 1.500; }
.c-mag-d { stroke: #f060d8; stroke-dasharray: 6 2; }
.c-brick { stroke: #c8403c; stroke-width: 1.200; }
.c-brick-d { stroke: #c89098; }
.c-red { stroke: #f02020; stroke-width: 1.200; }
.c-red-d { stroke: #f06868; }
.c-mag { stroke: #f030e0; stroke-width: 1.300; }
.c-mag-d2 { stroke: #f050e0; stroke-width: 1.300; stroke-dasharray: 5 2; }
.c-mag-d3 { stroke: #f060d8; stroke-dasharray: 4 2; }
.c-ltline { stroke: #8cc4f0; stroke-dasharray: 7 2; }
.zz { fill: none; stroke-width: 1; stroke-linejoin: miter; }
.z-red { stroke: #d82838; stroke-width: 1.100; }
.z-blue { stroke: #2828d8; stroke-width: 1.100; }
.z-ghost { stroke: #dcdce8; }
.z-pinkred { stroke: #e84858; }
.z-thick-b { stroke: #1018d8; stroke-width: 1.500; }
.z-thick-p { stroke: #f05c90; stroke-width: 1.300; }
.z-thick-r { stroke: #f01818; stroke-width: 1.500; }
.z-sky { stroke: #40c0f0; stroke-width: 1.100; }
.dot { fill: none; stroke: #a4bce6; stroke-dasharray: 1 1.500; }
.dot-s { stroke: #8cc0ec; stroke-dasharray: 3 1.500; }
.box { fill: none; stroke: #74747c; stroke-width: 1; }
.ring { fill: none; stroke-width: 1.100; }
.r-m { stroke: #e83ae0; }
.r-b { stroke: #4898e8; }

.lab { font-size: 5.2px; }
.lab-g { fill: #86d086; }
.lab-s { fill: #a8cce8; }
.lab-n { fill: #787890; }
.lab-f { fill: #9cb4e0; }
.lab-bb { fill: #3a3ac0; }
.lab-p { fill: #dcb0a8; }
.lab-r { fill: #d88090; }
.lab-m { fill: #f060d8; }
.kt { font-size: 6.5px; font-weight: bold; }
.kt-b { fill: #3a9ce8; }
.kt-m { fill: #ee30d8; }
.kt-n { fill: #20206c; }
.arr-u { fill: #1c86ec; }
.arr-g { stroke: #3ac83a; fill: none; }
.arr-d { fill: #e83030; }
.hdr { font-size: 4.3px; fill: #404048; white-space: pre; }
.paneline { fill: none; stroke: #74747c; stroke-width: 1; }
.paneline-b { fill: none; stroke: #74747c; stroke-width: 1.500; }
.axisbar { fill: none; stroke: #2c2c34; stroke-width: 1.200; }
.tri { fill: #111; }
.ax text { font-size: 4.3px; fill: #4a4a54; }
.pb-k { fill: #111; }
.pb-r { fill: #f01414; }
.pb-g { fill: #0a8a20; }
.pb-b { fill: #1414e0; }
.pbt { font-size: 4.3px; fill: #fff; }
.hist { fill: none; stroke-width: 10; }
.hist2 { fill: none; stroke-width: 11; }
.h-b { stroke: #1a1ae6; }
.h-r { stroke: #f61414; }
.osc { font-size: 4.4px; fill: #444450; }
.big { font-size: 9.2px; font-weight: bold; fill: #14141c; }
.b-c { fill: #ea2060; }
.b-p { fill: #9c34d4; }
.b-t { fill: #108c98; }
.tm text { font-size: 4.4px; fill: #4c4c58; }

/* tabs */
.tabs {
  height: 10px;
  display: flex;
  align-items: stretch;
  padding-left: 4px;
  background: #ecedf0;
  border-top: 1px solid #a8a8ac;
  overflow: hidden;
  position: relative;
}
.tab {
  flex: none;
  padding: 0 3.800px;
  border-right: 1px solid #b8b8b8;
  font-size: 4.900px;
  line-height: 9px;
  color: #8a8a90;
  white-space: nowrap;
}
.tab-on { background: #fff; color: #3a3a3a; border: 1px solid #9c9c9c; border-top: 0; line-height: 8px; }
.tabarrows { position: absolute; right: 0; top: 0; height: 9px; width: 14px; padding: 2px; display: flex; justify-content: space-between; background: #ecedf0; }
.ta { display: block; width: 0; height: 0; border: 2px solid transparent; }
.ta-l { border-right: 3px solid #b8b8bc; border-left: 0; }
.ta-r { border-left: 3px solid #111; border-right: 0; }

/* status */
.status {
  height: 10px;
  display: flex;
  align-items: center;
  font-size: 5px;
  color: #38383a;
  background: repeating-conic-gradient(#fbf9c4 0 25%, #f2f0dc 0 50%) 0 0 / 2px 2px;
}
.st { height: 10px; line-height: 10px; border-right: 1px solid #dedccc; flex: none; display: block; }
.st-help { width: 562px; padding-left: 3px; }
.st-prof { width: 50px; padding-left: 2px; }
.st-a { width: 42px; }
.st-conn { width: 26px; padding: 0 0 0 2px; }
.st-conn .ico { width: 11px; height: 8px; margin-top: 1px; }
.st-kb { padding-left: 2px; border-right: 0; }
.bottomstripe { height: 2px; background: #0a44e0; }
```
